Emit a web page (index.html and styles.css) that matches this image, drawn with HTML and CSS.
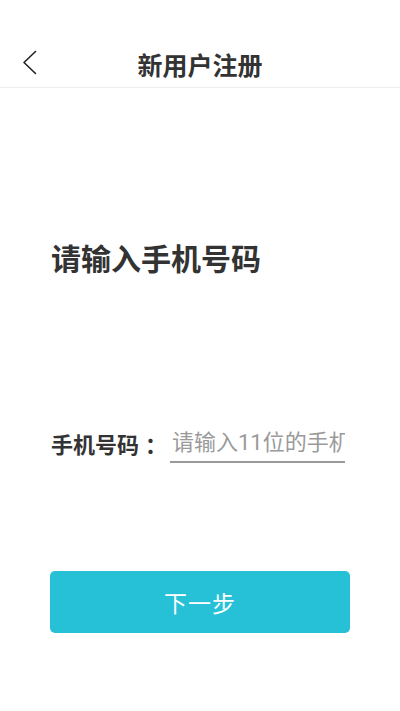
FILE: index.html
```html
<!DOCTYPE html>
<html lang="zh">
<head>
<meta charset="utf-8">
<link rel="stylesheet" href="styles.css">
</head>
<body>
<header class="topbar">
  <button class="back" aria-label="返回">
    <svg width="16" height="26" viewBox="0 0 16 26"><path d="M13.5 1.5 L2 12.5 L13.5 23.5" fill="none" stroke="#222" stroke-width="1.6" stroke-linecap="round" stroke-linejoin="round"/></svg>
  </button>
  <h1 class="title">新用户注册</h1>
</header>
<main class="content">
  <h2 class="heading">请输入手机号码</h2>
  <div class="field">
    <label class="label" for="phone">手机号码<span class="colon">：</span></label>
    <input id="phone" class="input" type="tel" placeholder="请输入11位的手机号码">
  </div>
  <button class="next">下一步</button>
</main>
</body>
</html>
```
FILE: styles.css
```css
* { box-sizing: border-box; }
html, body { margin: 0; padding: 0; background: #fff; }
body {
  width: 400px;
  font-family: "Noto Sans CJK SC", "Noto Sans", sans-serif;
  color: #333;
}
.topbar {
  position: relative;
  height: 88px;
  padding-top: 40px;
  border-bottom: 1px solid #eeeeee;
  display: flex;
  align-items: center;
  justify-content: center;
}
.back {
  position: absolute;
  left: 22px;
  top: 50px;
  width: 18px;
  height: 26px;
  padding: 0;
  border: 0;
  background: none;
}
.back svg { display: block; }
.title {
  margin: 0;
  height: 46px;
  line-height: 46px;
  font-size: 25px;
  font-weight: 700;
  color: #333;
}
.content {
  padding: 0 50px;
  display: flex;
  flex-direction: column;
}
.heading {
  margin: 151px 0 0 1px;
  font-size: 30px;
  line-height: 36px;
  font-weight: 700;
  color: #333;
}
.field {
  margin-top: 148px;
  height: 40px;
  display: flex;
  align-items: center;
}
.label {
  font-size: 22px;
  font-weight: 700;
  color: #333;
  padding-left: 1px;
  width: 120px;
  white-space: nowrap;
}
.colon {
  margin-left: 6px;
}
.input {
  width: 175px;
  height: 38px;
  margin-top: 1px;
  padding: 0 0 0 2px;
  border: 0;
  border-bottom: 2px solid #9a9a9a;
  font-family: Roboto, "Noto Sans CJK SC", sans-serif;
  font-size: 22px;
  color: #333;
  outline: none;
  background: transparent;
}
.input::placeholder { color: #9a9a9a; }
.next {
  margin-top: 108px;
  width: 300px;
  height: 62px;
  border: 0;
  border-radius: 5px;
  background: #26c1d7;
  color: #fff;
  font-family: inherit;
  font-size: 23px;
  letter-spacing: 1px;
}
```
